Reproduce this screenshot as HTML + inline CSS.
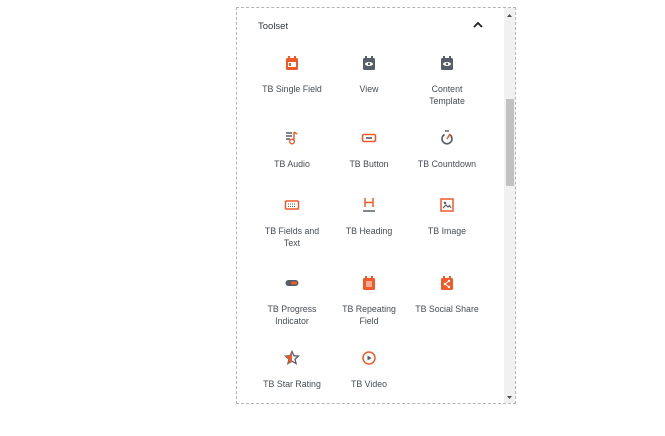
<!DOCTYPE html>
<html><head><style>
body{margin:0;width:665px;height:436px;background:#fff;position:relative;font-family:"Liberation Sans",sans-serif;overflow:hidden}
.panel{position:absolute;left:236px;top:7px;width:278px;height:395px;border:1px dashed #b5b5b5;background:#fff}
.sb{position:absolute;left:267px;top:0;width:11px;height:395px;background:#f1f1f1}
.th{position:absolute;left:2px;top:91px;width:8px;height:87px;background:#c1c1c1}
.h{position:absolute;left:21px;top:13px;font-size:9.5px;color:#32373c}
.it{position:absolute;width:76px;text-align:center;font-size:8.8px;line-height:12px;color:#474d54}
.it svg{display:block;margin:0 auto 12px}
</style></head><body>
<div class="panel">
<div class="h">Toolset</div>
<svg style="position:absolute;left:236px;top:13px" width="10" height="8"><path d="M1 6L5 2L9 6" fill="none" stroke="#1e1e1e" stroke-width="1.8"/></svg>
<div class="sb"><svg width="11" height="10"><path d="M3 6L5.5 3L8 6Z" fill="#505050"/></svg><div class="th"></div><svg style="position:absolute;bottom:2px;left:0" width="11" height="8"><path d="M3 3L5.5 6L8 3Z" fill="#505050"/></svg></div>
</div>
<div class="it" style="left:254px;top:55px"><svg width="14" height="16"><rect x="1" y="3" width="12" height="12" rx="1.5" fill="#f05a28"/><rect x="3" y="1" width="2" height="3" fill="#f05a28"/><rect x="9" y="1" width="2" height="3" fill="#f05a28"/><rect x="3" y="7" width="8" height="5" fill="#fff"/><rect x="4" y="8" width="2" height="3" fill="#f05a28"/></svg>TB Single Field</div>
<div class="it" style="left:331px;top:55px"><svg width="14" height="16"><rect x="1" y="3" width="12" height="12" rx="1.5" fill="#555d66"/><rect x="3" y="1" width="2" height="3" fill="#555d66"/><rect x="9" y="1" width="2" height="3" fill="#555d66"/><ellipse cx="7" cy="9" rx="4" ry="2" fill="#fff"/><circle cx="7" cy="9" r="1.2" fill="#555d66"/></svg>View</div>
<div class="it" style="left:409px;top:55px"><svg width="14" height="16"><rect x="1" y="3" width="12" height="12" rx="1.5" fill="#555d66"/><rect x="3" y="1" width="2" height="3" fill="#555d66"/><rect x="9" y="1" width="2" height="3" fill="#555d66"/><ellipse cx="7" cy="9" rx="4" ry="2" fill="#fff"/><circle cx="7" cy="9" r="1.2" fill="#555d66"/></svg>Content<br>Template</div>
<div class="it" style="left:254px;top:130px"><svg width="14" height="16"><path d="M1 3h6M1 6h6M1 9h4" stroke="#555d66" stroke-width="1.4"/><path d="M9 2v9" stroke="#f05a28" stroke-width="1.5"/><circle cx="7" cy="11.5" r="2.3" fill="none" stroke="#f05a28" stroke-width="1.4"/><path d="M9 2l3 2" stroke="#f05a28" stroke-width="1.5"/></svg>TB Audio</div>
<div class="it" style="left:331px;top:130px"><svg width="16" height="16"><rect x="1.5" y="4.5" width="13" height="7" rx="1.5" fill="none" stroke="#f05a28" stroke-width="1.6"/><path d="M5 8h6" stroke="#555d66" stroke-width="1.6"/></svg>TB Button</div>
<div class="it" style="left:409px;top:130px"><svg width="14" height="16"><path d="M4.5 4.5A5 5 0 1 0 9.5 4.5" fill="none" stroke="#555d66" stroke-width="1.6"/><path d="M7 9L10 4" stroke="#f05a28" stroke-width="1.6"/><path d="M5 1h4" stroke="#555d66" stroke-width="1.4"/></svg>TB Countdown</div>
<div class="it" style="left:254px;top:197px"><svg width="16" height="16"><rect x="1.5" y="4" width="13" height="8" rx="1" fill="none" stroke="#f05a28" stroke-width="1.5"/><path d="M4 7h8M4 9.5h8" stroke="#555d66" stroke-width="1" stroke-dasharray="1 1"/></svg>TB Fields and<br>Text</div>
<div class="it" style="left:331px;top:197px"><svg width="14" height="16"><path d="M3 1v9M11 1v9M3 5.5h8" stroke="#f05a28" stroke-width="1.5"/><path d="M1 14h12" stroke="#555d66" stroke-width="1.5"/></svg>TB Heading</div>
<div class="it" style="left:409px;top:197px"><svg width="16" height="16"><rect x="2" y="2" width="12" height="12" fill="none" stroke="#f05a28" stroke-width="1.5"/><circle cx="6" cy="6" r="1.2" fill="#555d66"/><path d="M4 11l3-3 2 2 1.5-1.5L12 11" fill="none" stroke="#555d66" stroke-width="1.2"/></svg>TB Image</div>
<div class="it" style="left:254px;top:275px"><svg width="16" height="16"><rect x="1.5" y="5" width="13" height="6" rx="3" fill="#555d66"/><rect x="7" y="6.5" width="6" height="3" rx="1.5" fill="#f05a28"/></svg>TB Progress<br>Indicator</div>
<div class="it" style="left:331px;top:275px"><svg width="14" height="16"><rect x="1" y="3" width="12" height="12" rx="1.5" fill="#f05a28"/><rect x="3" y="1" width="2" height="3" fill="#f05a28"/><rect x="9" y="1" width="2" height="3" fill="#f05a28"/><path d="M4 7h6M4 9h6M4 11h6" stroke="#fff" stroke-width="1"/></svg>TB Repeating<br>Field</div>
<div class="it" style="left:409px;top:275px"><svg width="14" height="16"><rect x="1" y="3" width="12" height="12" rx="1.5" fill="#f05a28"/><rect x="3" y="1" width="2" height="3" fill="#f05a28"/><rect x="9" y="1" width="2" height="3" fill="#f05a28"/><path d="M9 6L5 9l4 3" fill="none" stroke="#fff" stroke-width="1"/><circle cx="9" cy="6" r="1.2" fill="#fff"/><circle cx="5" cy="9" r="1.2" fill="#fff"/><circle cx="9" cy="12" r="1.2" fill="#fff"/></svg>TB Social Share</div>
<div class="it" style="left:254px;top:350px"><svg width="16" height="16"><path d="M8 1.5l1.9 4.2 4.6.4-3.5 3 1.1 4.5L8 11.2 3.9 13.6 5 9.1 1.5 6.1l4.6-.4z" fill="none" stroke="#555d66" stroke-width="1.3"/><path d="M8 1.5L6.1 5.7l-4.6.4 3.5 3-1.1 4.5L8 11.2z" fill="#f05a28"/></svg>TB Star Rating</div>
<div class="it" style="left:331px;top:350px"><svg width="16" height="16"><circle cx="8" cy="8" r="6" fill="none" stroke="#f05a28" stroke-width="1.5"/><path d="M6.5 5.5v5l4-2.5z" fill="#555d66"/></svg>TB Video</div>
</body></html>
